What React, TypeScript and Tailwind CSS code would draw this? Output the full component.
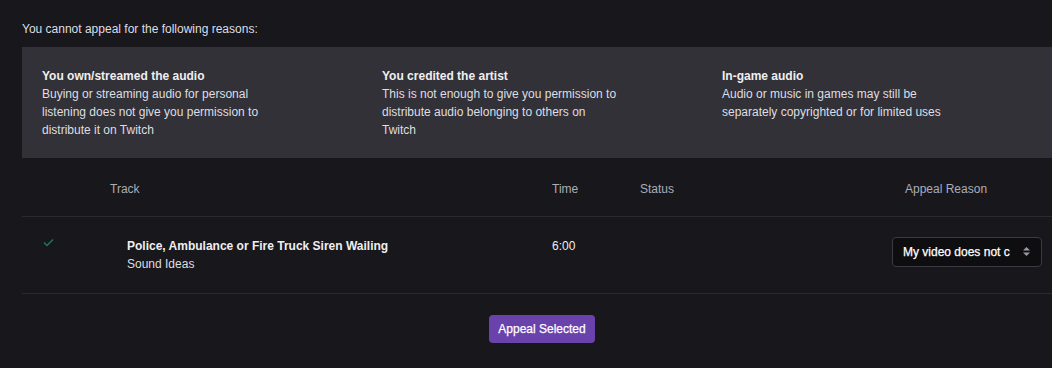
import React from 'react';

const reasons = [
    {
        title: 'You own/streamed the audio',
        body: 'Buying or streaming audio for personal listening does not give you permission to distribute it on Twitch',
    },
    {
        title: 'You credited the artist',
        body: 'This is not enough to give you permission to distribute audio belonging to others on Twitch',
    },
    {
        title: 'In-game audio',
        body: 'Audio or music in games may still be separately copyrighted or for limited uses',
    },
];

const App: React.FC = () => {
    return (
        <div className="w-[1052px] h-[368px] overflow-hidden bg-[#18171c] text-[12px] leading-[18px] text-[#dedee3] font-['Liberation_Sans',Arial,sans-serif]">
            <div className="w-[1040px] ml-[22px] pt-[20px]">
                <p className="text-[#dedee3]">You cannot appeal for the following reasons:</p>

                {/* Reasons panel */}
                <div className="mt-[9px] bg-[#323137] pl-[20px] pt-[20px] pb-[19px] flex">
                    {reasons.map((r) => (
                        <div key={r.title} className="w-[340px]">
                            <div className="w-[238px]">
                                <div className="font-bold text-[#efeff1]">{r.title}</div>
                                <div className="text-[#dedee3]">{r.body}</div>
                            </div>
                        </div>
                    ))}
                </div>

                {/* Table header */}
                <div className="flex items-center h-[59px] pt-[3px] border-b border-[#2a2a30] text-[#adadb8]">
                    <div className="w-[88px]" />
                    <div className="w-[442px]">Track</div>
                    <div className="w-[88px]">Time</div>
                    <div className="w-[252px]">Status</div>
                    <div className="pl-[13px]">Appeal Reason</div>
                </div>

                {/* Row */}
                <div className="flex items-center h-[77px] border-b border-[#2a2a30]">
                    <div className="w-[88px] self-start pt-[21px] pl-[21px]">
                        <svg width="11" height="9" viewBox="0 0 11 9" fill="none">
                            <path d="M1 4.5 L4 7.5 L10 1.5" stroke="#1f7a58" strokeWidth="1.4" />
                        </svg>
                    </div>
                    <div className="w-[442px] pl-[17px]">
                        <div className="font-bold text-[#efeff1]">Police, Ambulance or Fire Truck Siren Wailing</div>
                        <div className="text-[#dedee3]">Sound Ideas</div>
                    </div>
                    <div className="w-[88px] self-start pt-[20px] text-[#efeff1]">6:00</div>
                    <div className="w-[252px]" />
                    <div className="w-[150px] h-[30px] -mt-[7px] rounded-[4px] bg-[#0e0e10] border border-[#3b3944] flex items-center pl-[10px] pr-[10px]">
                        <span className="flex-1 whitespace-nowrap text-white [-webkit-text-stroke:0.25px_white]">My video does not c</span>
                        <svg width="9" height="11" viewBox="0 0 9 11" className="ml-[6px]">
                            <path d="M4.5 1 L8 4.5 H1 Z" fill="#9a9aa3" />
                            <path d="M4.5 10 L8 6.5 H1 Z" fill="#9a9aa3" />
                        </svg>
                    </div>
                </div>

                <div className="flex justify-center pt-[21px]">
                    <button className="h-[28px] px-[9px] rounded-[4px] bg-[#6a42ab] text-white [-webkit-text-stroke:0.25px_white]">
                        Appeal Selected
                    </button>
                </div>
            </div>
        </div>
    );
};

export default App;
